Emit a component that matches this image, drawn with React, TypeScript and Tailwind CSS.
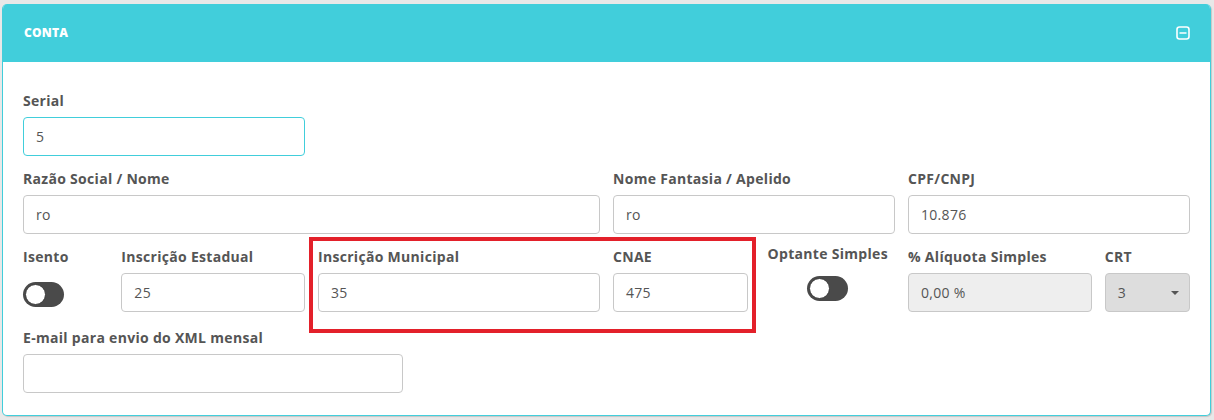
import { clsx } from "clsx";

type FieldProps = {
  label: string;
  value?: string;
  className?: string;
  focused?: boolean;
  disabled?: boolean;
};

const labelCls = "block h-5 text-[14px] leading-5 font-bold text-[#555] tracking-[0.3px] whitespace-nowrap";

function Field({ label, value = "", className, focused, disabled }: FieldProps) {
  return (
    <div className={className}>
      <label className={clsx(labelCls, "mb-[6px]")}>{label}</label>
      <div
        className={clsx(
          "h-[39px] rounded-[4px] border px-[12px] flex items-center text-[14px] text-[#555] tracking-[0.3px]",
          focused ? "border-[#41cedb]" : "border-[#c8c8c8]",
          disabled ? "bg-[#eeeeee]" : "bg-white"
        )}
      >
        {value}
      </div>
    </div>
  );
}

function Toggle() {
  return (
    <div className="w-[41px] h-[25px] rounded-full bg-[#4a4a4a] p-[2px] flex items-center">
      <div className="w-[21px] h-[21px] rounded-full bg-white border border-[#3a3a3a]" />
    </div>
  );
}

export default function App() {
  return (
    <div className="min-h-[420px] bg-[#e8e8e8] pt-[4px] pl-[2px] pr-[2px] font-['Open_Sans',sans-serif]">
      <div className="w-[1209px] rounded-[5px] overflow-hidden bg-white border border-t-0 border-[#41cedb] shadow-[1px_1px_1px_rgba(0,0,0,0.15)]">
        <div className="h-[58px] bg-[#41cedb] flex items-center justify-between pl-[21px] pr-[20px]">
          <h2 className="text-white font-extrabold text-[12px] tracking-[0.2px]">CONTA</h2>
          <svg width="14" height="14" viewBox="0 0 14 14" fill="none" stroke="white" strokeWidth="1.6">
            <rect x="1" y="1" width="12" height="12" rx="2.5" />
            <line x1="3.5" y1="7" x2="10.5" y2="7" />
          </svg>
        </div>

        <div className="pl-[20px] pr-[20px] pt-[29px] pb-[22px]">
          <div className="grid grid-cols-12 gap-x-[13px] gap-y-[13px]">
            <Field label="Serial" value="5" className="col-span-3" focused />
            <div className="col-span-9" />

            <Field label="Razão Social / Nome" value="ro" className="col-span-6" />
            <Field label="Nome Fantasia / Apelido" value="ro" className="col-span-3" />
            <Field label="CPF/CNPJ" value="10.876" className="col-span-3" />

            <div className="col-span-1">
              <label className={clsx(labelCls, "mb-[15px]")}>Isento</label>
              <Toggle />
            </div>
            <Field label="Inscrição Estadual" value="25" className="col-span-2" />
            <div className="col-span-6 grid grid-cols-6 gap-x-[13px] relative">
              <Field label="Inscrição Municipal" value="35" className="col-span-3" />
              <div className="col-span-3 grid grid-cols-2 gap-x-[13px]">
                <Field label="CNAE" value="475" />
                <div className="flex flex-col items-center -mt-[3px]">
                  <label className={clsx(labelCls, "mb-[12px]")}>Optante Simples</label>
                  <Toggle />
                </div>
              </div>
              <div className="absolute left-[-9px] top-[-10px] w-[447px] h-[96px] border-[4px] border-[#e3202a] pointer-events-none" />
            </div>
            <Field label="% Alíquota Simples" value="0,00 %" className="col-span-2" disabled />
            <div className="col-span-1">
              <label className={clsx(labelCls, "mb-[6px]")}>CRT</label>
              <div className="h-[39px] rounded-[4px] border border-[#c8c8c8] bg-[#dddddd] pl-[12px] pr-[10px] flex items-center justify-between text-[14px] text-[#555]">
                <span>3</span>
                <span className="w-0 h-0 border-l-[4px] border-r-[4px] border-t-[4px] border-l-transparent border-r-transparent border-t-[#555]" />
              </div>
            </div>

            <Field label="E-mail para envio do XML mensal" className="col-span-4 mt-[3px]" />
          </div>
        </div>
      </div>
    </div>
  );
}
